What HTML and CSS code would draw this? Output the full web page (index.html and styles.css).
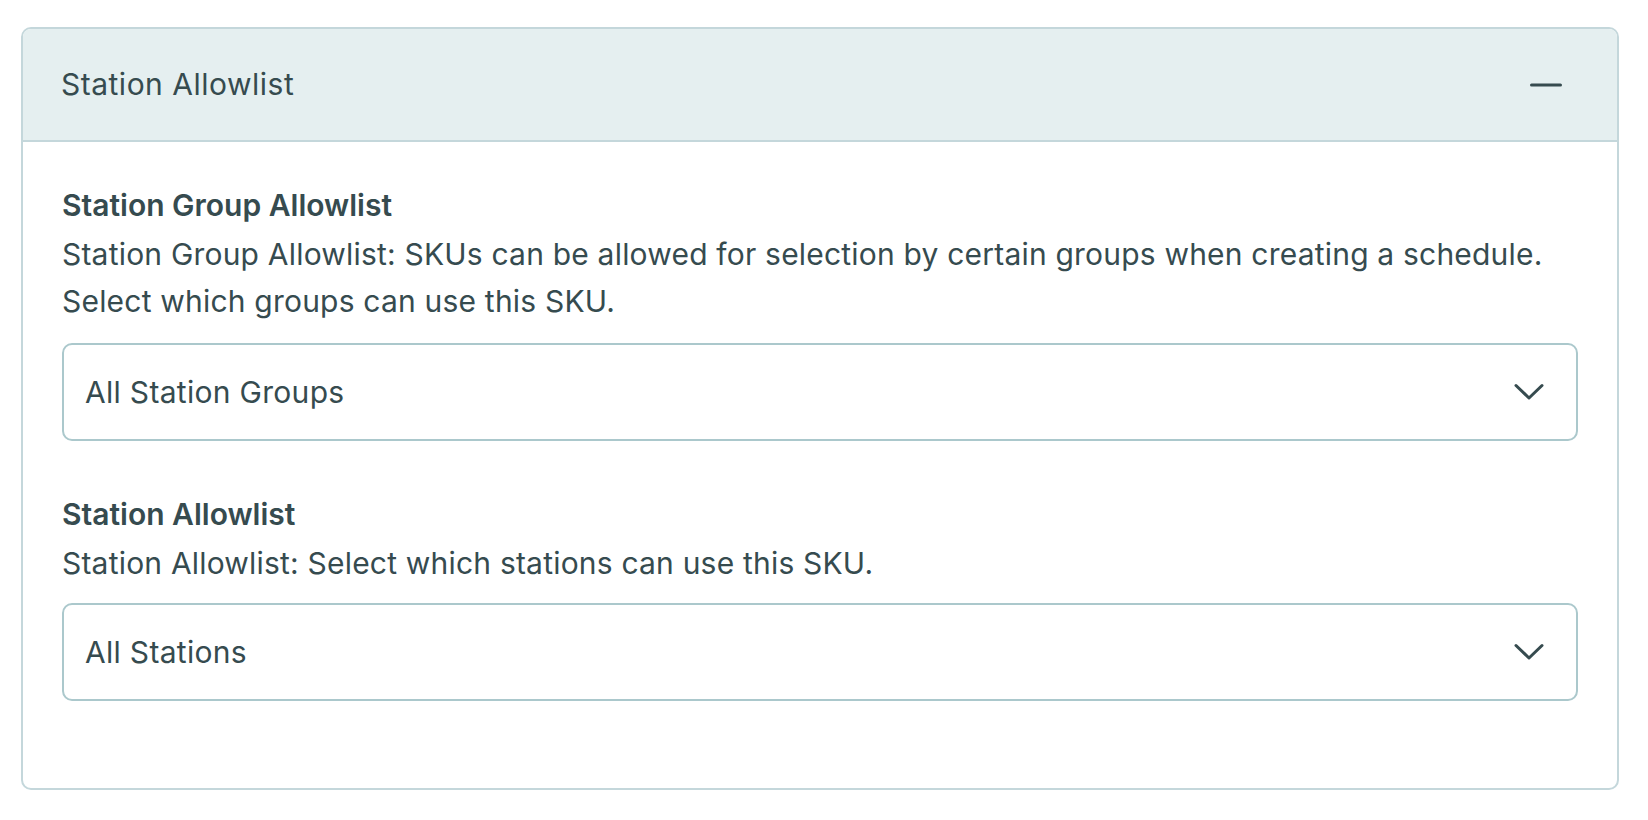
FILE: index.html
```html
<!doctype html>
<html lang="en">
<head>
    <meta charset="UTF-8">
    <title>Station Allowlist</title>
    <link rel="stylesheet" href="styles.css">
</head>
<body>
<div class="panel">
    <div class="panel-header">
        <span class="panel-title">Station Allowlist</span>
        <svg class="collapse-icon" width="32" height="6" viewBox="0 0 32 6">
            <line x1="1.5" y1="3" x2="30.5" y2="3" stroke="currentColor" stroke-width="3" stroke-linecap="round"/>
        </svg>
    </div>
    <div class="panel-body">
        <div class="field">
            <h3 class="field-label">Station Group Allowlist</h3>
            <p class="field-help help-long">Station Group Allowlist: SKUs can be allowed for selection by certain groups when creating a schedule. Select which groups can use this SKU.</p>
            <div class="select-box">
                <span class="select-value">All Station Groups</span>
                <svg class="chevron" width="30" height="18" viewBox="0 0 30 18">
                    <path d="M2 2.5 L15 15 L28 2.5" fill="none" stroke="currentColor" stroke-width="3" stroke-linecap="round" stroke-linejoin="round"/>
                </svg>
            </div>
        </div>
        <div class="field">
            <h3 class="field-label">Station Allowlist</h3>
            <p class="field-help">Station Allowlist: Select which stations can use this SKU.</p>
            <div class="select-box">
                <span class="select-value">All Stations</span>
                <svg class="chevron" width="30" height="18" viewBox="0 0 30 18">
                    <path d="M2 2.5 L15 15 L28 2.5" fill="none" stroke="currentColor" stroke-width="3" stroke-linecap="round" stroke-linejoin="round"/>
                </svg>
            </div>
        </div>
    </div>
</div>
</body>
</html>
```
FILE: styles.css
```css
body {
    margin: 0;
    background: #ffffff;
    font-family: "Inter", "Noto Sans", sans-serif;
    color: #364b4f;
}
.panel {
    margin: 27px 29px 0 21px;
    border: 2px solid #c4d7db;
    border-radius: 10px;
    overflow: hidden;
}
.panel-header {
    height: 111px;
    display: flex;
    align-items: center;
    justify-content: space-between;
    padding: 0 55px 0 38px;
    background: #e5eff0;
    border-bottom: 2px solid #c4d7db;
}
.panel-title {
    font-size: 30px;
    line-height: 35px;
    letter-spacing: 0.5px;
}
.collapse-icon {
    display: block;
    color: #364b4f;
}
.panel-body {
    padding: 46px 39px 87px 39px;
}
.field {
    margin-bottom: 56px;
}
.field:last-child {
    margin-bottom: 0;
}
.field-label {
    margin: 0 0 8px 0;
    font-size: 30px;
    line-height: 35px;
    font-weight: 600;
}
.field-help {
    margin: 0 0 16px 0;
    font-size: 30px;
    line-height: 47px;
    letter-spacing: 0.2px;
}
.help-long {
    margin-bottom: 18px;
}
.select-box {
    box-sizing: border-box;
    height: 98px;
    display: flex;
    align-items: center;
    justify-content: space-between;
    padding: 0 32px 0 21px;
    border: 2px solid #abc8cc;
    border-radius: 10px;
    background: #fff;
}
.select-value {
    font-size: 30px;
    letter-spacing: 0.3px;
}
.chevron {
    display: block;
    color: #364b4f;
}
```
